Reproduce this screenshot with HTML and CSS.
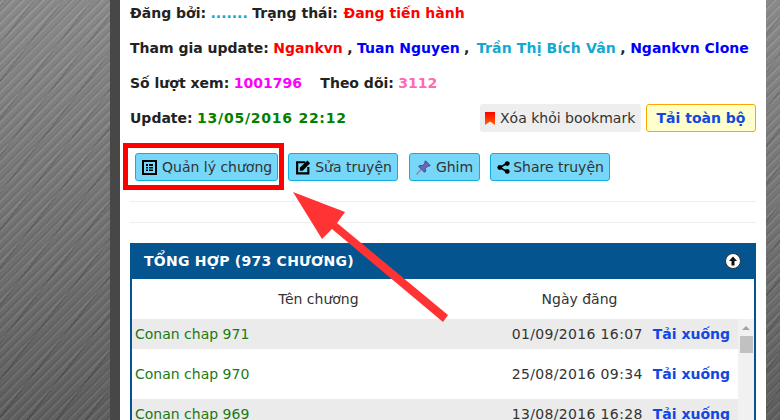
FILE: index.html
```html
<!DOCTYPE html>
<html lang="vi">
<head>
<meta charset="utf-8">
<title>Conan</title>
<link rel="stylesheet" href="styles.css">
</head>
<body>
<main class="page">
  <div class="info-row"><b>Đăng bởi:</b> <b class="teal">.......</b> <b>Trạng thái:</b> <b class="red status">Đang tiến hành</b></div>
  <div class="info-row"><b>Tham gia update:</b> <b class="red">Ngankvn</b> <b>,</b> <b class="blue">Tuan Nguyen</b> <b>,</b> <b class="teal wide">Trần Thị Bích Vân</b> <b>,</b> <b class="blue">Ngankvn Clone</b></div>
  <div class="info-row"><b>Số lượt xem:</b> <b class="magenta">1001796</b> <b class="follow">Theo dõi:</b> <b class="pink">3112</b></div>
  <div class="update-row">
    <div><b>Update:</b> <b class="green">13/05/2016 22:12</b></div>
    <div class="update-actions">
      <a class="btn-bookmark"><svg class="ico-bm" viewBox="0 0 10 13"><defs><linearGradient id="bm" x1="0" y1="0" x2="0" y2="1"><stop offset="0" stop-color="#f00"/><stop offset="1" stop-color="#f60"/></linearGradient></defs><path d="M0 0h10v13L5 9.500 0 13z" fill="url(#bm)"/></svg>Xóa khỏi bookmark</a>
      <a class="btn-download">Tải toàn bộ</a>
    </div>
  </div>
  <div class="action-row">
    <a class="btn"><svg class="ico" viewBox="0 0 15 15"><rect x="1" y="1" width="13" height="13" fill="none" stroke="#000" stroke-width="2"/><path d="M4 4h2v2H4zM7 4h4v2H7zM4 7h2v1.500H4zM7 7h4v1.500H7zM4 9.500h2V11H4zM7 9.500h4V11H7z" fill="#000"/></svg>Quản lý chương</a>
    <a class="btn"><svg class="ico ico-edit" viewBox="0 0 15 15"><path d="M9.500 3H2v10.500h10.500V7.500" fill="none" stroke="#000" stroke-width="2"/><path d="M4.500 11V8.300L11.500 1.300 14.200 4l-7 7z" fill="#000"/></svg>Sửa truyện</a>
    <a class="btn btn-pin"><svg class="ico" viewBox="0 0 15 15"><path d="M5 9.500L.5 14.500" stroke="#8a8a9a" stroke-width="1.300"/><path d="M9.500.800l4.700 4.700-1.300.700-1-.300-2.600 2.600.4 2.600-1.200 1.200-5.800-5.800 1.200-1.200 2.600.4 2.600-2.600-.3-1z" fill="#6a66bd" stroke="#38356f" stroke-width=".8"/></svg>Ghim</a>
    <a class="btn"><svg class="ico ico-share" viewBox="0 0 14 14"><path d="M3 7l8-4.500M3 7l8 4.500" stroke="#000" stroke-width="1.800"/><circle cx="3" cy="7" r="2.600"/><circle cx="11" cy="2.800" r="2.600"/><circle cx="11" cy="11.200" r="2.600"/></svg>Share truyện</a>
  </div>
  <hr class="rule">
  <hr class="rule">
  <section class="panel">
    <header class="panel-head">
      <h2 class="panel-title">TỔNG HỢP (973 CHƯƠNG)</h2>
      <svg class="ico-up" viewBox="0 0 16 16"><circle cx="8" cy="8" r="7.500" fill="#fff" stroke="#333"/><path d="M8 3.500L12 8H9.500v4.500h-3V8H4z" fill="#111"/></svg>
    </header>
    <div class="col-head"><span class="col-name">Tên chương</span><span class="col-date">Ngày đăng</span></div>
    <div class="list-wrap">
      <div class="list">
        <div class="chapter odd"><a class="chapter-name">Conan chap 971</a><span class="chapter-date">01/09/2016 16:07</span><a class="chapter-dl">Tải xuống</a></div>
        <div class="chapter even"><a class="chapter-name">Conan chap 970</a><span class="chapter-date">25/08/2016 09:34</span><a class="chapter-dl">Tải xuống</a></div>
        <div class="chapter odd"><a class="chapter-name">Conan chap 969</a><span class="chapter-date">13/08/2016 16:28</span><a class="chapter-dl">Tải xuống</a></div>
      </div>
      <div class="scrollbar"><span class="scroll-arrow"></span><span class="scroll-thumb"></span></div>
    </div>
  </section>
</main>
<div class="callout-box"></div>
<svg class="callout-arrow" viewBox="0 0 780 420"><polygon points="293,192 345,212 337,223 448,315 443,322 332,229 322,239" fill="#ff3333"/></svg>
</body>
</html>
```
FILE: styles.css
```css
html, body { margin: 0; height: 420px; overflow: hidden; }
body {
  position: relative;
  font-family: "DejaVu Sans", Verdana, sans-serif;
  font-size: 14px;
  color: #333;
  background-color: #777;
  background-image:
    linear-gradient(180deg, rgba(255,255,255,.14), rgba(0,0,0,.2)),
    repeating-linear-gradient(135deg, rgba(0,0,0,.1) 0 2px, rgba(255,255,255,.07) 2px 4px, rgba(0,0,0,.03) 4px 7px),
    repeating-linear-gradient(128deg, rgba(255,255,255,.05) 0 3px, rgba(0,0,0,.1) 3px 5px, rgba(255,255,255,.02) 5px 23px);
}
.page {
  box-sizing: border-box;
  width: 656px;
  height: 420px;
  margin-left: 110px;
  padding: 0 10px;
  border-left: 10px solid #474747;
  background: #fff;
  background-clip: padding-box;
  overflow: hidden;
}
b { color: #222; }
.info-row { line-height: 26px; margin-bottom: 9px; white-space: nowrap; }
.info-row:nth-child(3) { margin-bottom: 8px; }
b.teal { color: #13a9cf; }
b.red { color: #f00; }
b.blue { color: #00f; }
b.magenta { color: #f0f; }
b.pink { color: #ff69b4; }
b.green { color: #008000; letter-spacing: .75px; }
b.status { margin-left: 1px; }
b.wide { letter-spacing: .15px; margin-left: 3px; }
.follow { margin-left: 14px; }
.update-row { display: flex; justify-content: space-between; align-items: center; height: 28px; margin-bottom: 21px; }
.update-actions { display: flex; gap: 5px; }
.btn-bookmark {
  display: flex; align-items: center; box-sizing: border-box; height: 28px; width: 161px;
  padding-left: 5px; background: #eee; border-radius: 3px; color: #333;
}
.ico-bm { width: 10px; height: 13px; margin-right: 5px; flex: none; }
.btn-download {
  display: flex; align-items: center; justify-content: center; box-sizing: border-box; height: 28px; width: 110px;
  background: #ffc; border: 1px solid #ffa500; border-radius: 3px; color: #1248e0; font-weight: bold;
}
.action-row { display: flex; gap: 10px; height: 28px; padding-left: 5px; margin-bottom: 20px; }
.btn {
  display: flex; align-items: center; box-sizing: border-box; height: 28px; padding: 0 5px 0 6px;
  background: #76d7f8; border: 1px solid #0fb0dc; border-radius: 3px; color: #333;
}
.btn-pin { padding-right: 6px; margin-left: 1px; }
.ico { width: 15px; height: 15px; margin-right: 5px; flex: none; }
.ico-edit { width: 16px; height: 16px; margin-right: 4px; }
.ico-share { width: 13px; height: 13px; margin-right: 3px; }
.rule { border: 0; border-top: 1px solid #eee; margin: 0 0 20px; height: 0; }
.panel { border: solid #04548f; border-width: 0 2px; height: 177px; }
.panel-head {
  display: flex; align-items: center; justify-content: space-between; height: 36px; margin: 0 -2px;
  padding: 0 15px 0 14px; background: #04548f;
}
.panel-title { margin: 0; font-size: 14px; font-weight: bold; color: #fff; letter-spacing: .25px; }
.ico-up { width: 16px; height: 16px; margin-top: -1px; }
.col-head { display: flex; height: 40px; align-items: center; }
.col-name { width: 373px; text-align: center; }
.col-date { width: 149px; text-align: center; }
.list-wrap { display: flex; }
.list { flex: 1; }
.chapter { display: flex; align-items: center; padding: 0 8px 0 3px; }
.chapter.odd { height: 30px; background: #ebebeb; }
.chapter.even { height: 50px; }
.chapter-name { flex: 1; color: #1a7a14; }
.chapter-date { margin-right: 10px; letter-spacing: .35px; }
.chapter-dl { color: #1248e0; font-weight: bold; }
.scrollbar { position: relative; flex: none; width: 16px; height: 110px; background: #f1f1f1; }
.scroll-arrow {
  position: absolute; left: 4px; top: 7px; width: 0; height: 0;
  border: 4px solid transparent; border-top: 0; border-bottom: 4px solid #a3a3a3;
}
.scroll-thumb { position: absolute; left: 2px; top: 17px; width: 13px; height: 17px; background: #c1c1c1; }
.callout-box { position: absolute; left: 123px; top: 143px; width: 151px; height: 37px; border: 5px solid #f00; }
.callout-arrow { position: absolute; left: 0; top: 0; width: 780px; height: 420px; pointer-events: none; }
```
